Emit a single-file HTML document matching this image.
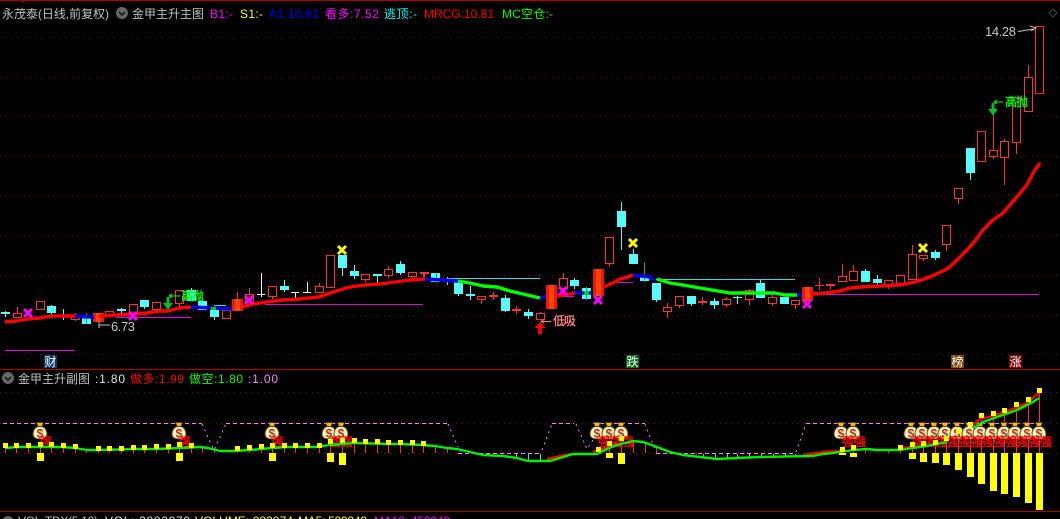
<!DOCTYPE html>
<html><head><meta charset="utf-8"><title>永茂泰</title>
<style>
html,body{margin:0;padding:0;background:#000;width:1060px;height:519px;overflow:hidden}
svg{display:block}
text{font-family:"Liberation Sans","WenQuanYi Zen Hei","Noto Sans CJK SC",sans-serif;font-size:12px}
.k{shape-rendering:crispEdges}
.s{stroke-width:.35}
.q{font-size:12px;stroke:#ff0000;stroke-width:.45}
</style></head><body>
<svg width="1060" height="519" viewBox="0 0 1060 519" xmlns="http://www.w3.org/2000/svg">
<defs>
<g id="bag">
<path d="M-3.5 -8.5L3.5 -8.5L1.8 -4.5L-1.8 -4.5Z" fill="#f0b828" stroke="#5a3a08" stroke-width=".7"/>
<path d="M-2 -4.5C-5.5 -3.5 -7 0 -7 3C-7 6.5 -4 8 0 8C4 8 7 6.5 7 3C7 0 5.5 -3.5 2 -4.5Z" fill="#fff0b8" stroke="#5a4010" stroke-width="1"/>
<text x="0" y="6.5" text-anchor="middle" fill="#983c28" style="font-size:12px;font-weight:bold">$</text>
</g>
<path id="xm" d="M-4 -4L4 4M4 -4L-4 4" fill="none" stroke="#ff00ff" stroke-width="3"/>
<path id="xy" d="M-4 -4L4 4M4 -4L-4 4" fill="none" stroke="#ffff00" stroke-width="3"/>
</defs>

<!-- frame -->
<g class="k" fill="#b00000">
<rect x="0" y="0" width="1060" height="1"/>
<rect x="23" y="0" width="1" height="3"/>
<rect x="0" y="369" width="1060" height="1"/>
<rect x="0" y="511" width="1060" height="1"/>
</g>
<!-- grid -->
<g class="k" stroke="#701010" stroke-width="1" stroke-dasharray="1 5" fill="none">
<path d="M0 37.5H1060M0 77.5H1060M0 116.5H1060M0 156.5H1060M0 195.5H1060M0 235.5H1060M0 275.5H1060M0 315.5H1060M0 354.5H1060M0 392.5H1060M0 423.5H1060M0 453.5H1060"/>
</g>
<path d="M1053 9L1057 13L1053 17L1049 13Z" fill="none" stroke="#444"/>

<!-- title -->
<text x="2" y="18" fill="#c0c0c0" textLength="107">永茂泰(日线,前复权)</text>
<circle cx="122" cy="13" r="6" fill="#666"/><path d="M119 12l3 3 3-3" fill="none" stroke="#111" stroke-width="1.5"/>
<text x="132" y="18" fill="#c0c0c0" textLength="72">金甲主升主图</text>
<text x="210" y="18" fill="#ff00ff" textLength="23">B1:-</text>
<text x="240" y="18" fill="#ffff00" textLength="23">S1:-</text>
<text x="269" y="18" fill="#0000ff" textLength="50">A1:10.81</text>
<text x="325" y="18" fill="#ff00ff" textLength="54">看多:7.52</text>
<text x="384" y="18" fill="#00ffff" textLength="33">逃顶:-</text>
<text x="424" y="18" fill="#ff0000" textLength="70">MRCG:10.81</text>
<text x="502" y="18" fill="#00ff00" textLength="51">MC空仓:-</text>

<!-- magenta / cyan levels -->
<g class="k" fill="#e000e0">
<rect x="5" y="350" width="70" height="1"/>
<rect x="116" y="317" width="75" height="1"/>
<rect x="265" y="304" width="158" height="1"/>
<rect x="563" y="296" width="11" height="1"/>
<rect x="609" y="282" width="24" height="1"/>
<rect x="825" y="294" width="214" height="1"/>
</g>
<g class="k" fill="#30e0e0">
<rect x="447" y="278" width="93" height="1"/>
<rect x="656" y="279" width="139" height="1"/>
<rect x="214" y="305" width="12" height="1"/>
</g>

<!-- hollow red candles -->
<path class="k" fill="none" stroke="#ff3232" d="
M13.5 313.5h8v4h-8zM17.5 307V313M17.5 318V318
M36.5 301.5h8v8h-8z
M71.5 316.5h8v3h-8zM75.5 313V316M75.5 320V321
M105.5 311.5h8v3h-8z
M129.5 304.5h8v9h-8z
M152.5 302.5h8v7h-8z
M175.5 290.5h8v13h-8zM179.5 304V307
M222.5 310.5h8v8h-8z
M245.5 294.5h8v10h-8zM249.5 288V294
M268.5 286.5h8v10h-8zM272.5 297V299
M315.5 286.5h8v6h-8zM319.5 283V286
M326.5 255.5h8v32h-8z
M361.5 274.5h8v5h-8zM365.5 280V282
M384.5 269.5h8v6h-8zM388.5 266V269M388.5 276V278
M408.5 272.5h8v4h-8zM412.5 277V280
M477.5 296.5h8v3h-8zM481.5 300V304
M536.5 313.5h8v6h-8zM540.5 312V313
M559.5 278.5h8v10h-8zM563.5 273V278
M605.5 237.5h8v26h-8zM609.5 264V267
M663.5 307.5h8v4h-8zM667.5 303V307M667.5 312V318
M675.5 296.5h8v9h-8zM679.5 306V308
M722.5 299.5h8v5h-8zM726.5 297V299M726.5 305V307
M745.5 290.5h8v9h-8zM749.5 289V290M749.5 300V305
M768.5 297.5h8v6h-8zM772.5 295V297M772.5 304V306
M791.5 300.5h8v4h-8zM795.5 305V309
M838.5 276.5h8v5h-8zM842.5 264V276
M849.5 271.5h8v9h-8zM853.5 265V271
M884.5 280.5h8v6h-8zM888.5 287V289
M896.5 275.5h8v8h-8z
M908.5 254.5h8v25h-8zM912.5 245V254
M919.5 255.5h8v3h-8zM923.5 259V261
M942.5 225.5h8v19h-8zM946.5 245V251
M954.5 188.5h8v10h-8zM958.5 199V204
M977.5 131.5h8v30h-8z
M989.5 150.5h8v6h-8zM993.5 112V150M993.5 157V159
M1000.5 141.5h8v16h-8zM1004.5 139V141M1004.5 158V185
M1012.5 97.5h8v45h-8zM1016.5 143V154
M1024.5 77.5h8v34h-8zM1028.5 65V77
M1035.5 26.5h8v67h-8z"/>
<!-- flat red crosses -->
<path class="k" fill="#ff3232" d="M420 272h9v2h-9zM423 274h2v3h-2zM489 295h9v2h-9zM493 292h1v8h-1zM512 309h9v2h-9zM516 306h1v8h-1zM698 301h9v2h-9zM702 297h1v8h-1zM815 285h9v1h-9zM819 278h1v12h-1zM826 284h9v2h-9zM830 286h1v3h-1z"/>
<!-- cyan candles -->
<path class="k" fill="#54fcfc" d="
M1 312h9v2h-9zM5 311h1v6h-1z
M47 306h9v7h-9zM51 305h1v10h-1z
M62 316h2v1h-2zM63 309h1v11h-1z
M82 317h9v7h-9z
M117 309h9v2h-9zM121 308h1v5h-1z
M140 300h9v7h-9zM144 307h1v2h-1z
M187 290h9v11h-9zM191 288h1v2h-1z
M198 301h9v9h-9z
M210 310h9v7h-9zM214 317h1v3h-1z
M280 286h9v4h-9zM284 280h1v12h-1z
M338 255h9v13h-9zM342 268h1v8h-1z
M350 271h9v5h-9zM354 265h1v14h-1z
M373 274h9v2h-9zM377 276h1v7h-1z
M396 264h9v9h-9zM400 261h1v14h-1z
M431 273h9v9h-9z
M443 281h9v1h-9zM447 277h1v8h-1z
M454 282h9v12h-9zM458 294h1v2h-1z
M466 294h9v2h-9zM470 286h1v14h-1z
M501 298h9v13h-9zM505 295h1v17h-1z
M524 312h9v4h-9zM528 309h1v10h-1z
M570 280h9v6h-9zM574 278h1v11h-1z
M582 288h9v11h-9z
M617 211h9v16h-9zM621 202h1v48h-1z
M629 254h9v10h-9zM633 249h1v5h-1z
M640 276h9v5h-9z
M652 283h9v17h-9zM656 300h1v2h-1z
M687 296h9v8h-9zM691 304h1v2h-1z
M710 301h9v4h-9zM714 298h1v11h-1z
M733 297h9v1h-9zM737 296h1v8h-1z
M756 283h9v15h-9zM760 280h1v3h-1z
M780 297h9v7h-9z
M861 271h9v11h-9zM865 269h1v2h-1z
M873 279h9v4h-9zM877 275h1v10h-1z
M931 252h9v6h-9zM935 250h1v10h-1z
M966 148h9v25h-9zM970 173h1v7h-1z"/>
<!-- green wicks -->
<path class="k" fill="#10b050" d="M86 313h1v11h-1zM436 273h1v10h-1zM586 287h1v13h-1zM644 262h1v20h-1z"/>
<!-- white crosses -->
<path class="k" fill="#f0f0f0" d="M257 294h8v1h-8zM261 273h1v24h-1zM291 292h8v1h-8zM295 292h1v6h-1zM303 292h8v1h-8zM307 282h1v11h-1z"/>
<!-- solid red -->
<g class="k">
<rect x="93" y="313" width="11" height="9" fill="#ee1515"/><rect x="96" y="313" width="5" height="9" fill="#ff4400"/>
<rect x="232" y="299" width="11" height="12" fill="#ee1515"/><rect x="235" y="299" width="5" height="12" fill="#ff4400"/><rect x="237" y="292" width="1" height="7" fill="#ff3232"/>
<rect x="546" y="285" width="11" height="24" fill="#ee1515"/><rect x="549" y="285" width="5" height="24" fill="#ff4400"/>
<rect x="593" y="269" width="11" height="27" fill="#ee1515"/><rect x="596" y="269" width="5" height="27" fill="#ff4400"/>
<rect x="802" y="287" width="11" height="14" fill="#ee1515"/><rect x="805" y="287" width="5" height="14" fill="#ff4400"/>
</g>

<!-- main MA -->
<g fill="none" stroke-width="3.4" stroke-linejoin="round">
<path stroke="#ff0000" d="M5 322L16 321L28 319L40 318L51 316L75 316M99 316.5L115 315L133 314L147 313L160 311L168 311L179 308L191 307M243 307L253 304L267 302L283 300L300 299L319 297L333 292L350 287L365 285L380 284L395 282L410 280L425 279M557 296L570 294L575 293M604 287L615 282L620 279L628 277L633 275M812 294L825 293L840 291L850 288L860 287L880 286L900 285L915 282L930 277L947 269L955 262L967 250L975 241L983 230L993 220L1003 213L1010 205L1015 199L1027 185L1033 173L1040 163"/>
<path stroke="#0000e0" d="M75 316.5L94 317M191 307L213 308L232 309M425 279L458 281M540 298L546 297M575 293L592 293M633 275L650 277L655 280M797 295L802 295"/>
<path stroke="#00ff00" d="M458 281L470 283L483 286L497 287L510 291L523 294L540 298M657 279L670 283L683 285L700 288L712 290L730 293L775 293L785 295L797 295"/>
</g>
<rect class="k" x="211" y="307" width="5" height="3" fill="#00d000"/>
<rect class="k" x="584" y="291" width="5" height="4" fill="#00d000"/>

<!-- X marks -->
<use href="#xm" x="28" y="313"/><use href="#xm" x="133" y="316"/><use href="#xm" x="249" y="300"/><use href="#xm" x="563" y="291"/><use href="#xm" x="598" y="300"/><use href="#xm" x="807" y="304"/>
<use href="#xy" x="342" y="250"/><use href="#xy" x="633" y="243"/><use href="#xy" x="923" y="248"/>

<!-- annotations -->
<path d="M99 322V328M99 325H110" fill="none" stroke="#c0c0c0" class="k"/>
<text x="111" y="331" fill="#c8c8c8" textLength="24" style="font-size:13px">6.73</text>
<path d="M541 321.5H551M541 321.5l3 -2M541 321.5l3 2" fill="none" stroke="#ff8080"/>
<text x="553" y="325" fill="#ff8080" stroke="#ff8080" class="s" textLength="23">低吸</text>
<path d="M540 322L545.5 328H542V334H538V328H534.500Z" fill="#ff0000"/>
<text x="985" y="36" fill="#c8c8c8" textLength="31" style="font-size:13px">14.28</text>
<path d="M1018 31.5L1034 29M1030 26L1036 28L1031 31" fill="none" stroke="#c0c0c0"/>
<path d="M994 102H1003M994 102l3 -2M994 102l3 2" fill="none" stroke="#00ff00"/>
<text x="1005" y="106" fill="#00ff00" stroke="#00ff00" class="s" textLength="23">高抛</text>
<path d="M991.500 103H994.500V109H998L993 115.500L988 109H991.500Z" fill="#00c030"/>
<path d="M169 296H180M169 296l3 -2M169 296l3 2" fill="none" stroke="#00ff00"/>
<text x="181" y="300" fill="#00ff00" stroke="#00ff00" class="s" textLength="23">高抛</text>
<path d="M166.500 297H169.500V303H173L168 310L163 303H166.500Z" fill="#00c030"/>

<!-- labels -->
<g class="k">
<rect x="44" y="355" width="13" height="13" fill="#0b3a66"/>
<rect x="626" y="355" width="13" height="13" fill="#0a6a14"/>
<rect x="951" y="355" width="13" height="13" fill="#7a4510"/>
<rect x="1009" y="355" width="13" height="13" fill="#7a0808"/>
</g>
<text x="44.5" y="366" fill="#fff">财</text>
<text x="626.5" y="366" fill="#fff">跌</text>
<text x="951.5" y="366" fill="#fff">榜</text>
<text x="1009.5" y="366" fill="#fff">涨</text>

<!-- sub title -->
<circle cx="8" cy="378" r="6" fill="#666"/><path d="M5 377l3 3 3-3" fill="none" stroke="#111" stroke-width="1.5"/>
<text x="18" y="383" fill="#c0c0c0" textLength="72">金甲主升副图</text>
<text x="95" y="383" fill="#e0e0e0" textLength="30">:1.80</text>
<text x="130" y="383" fill="#ff0000" textLength="54">做多:1.99</text>
<text x="189" y="383" fill="#00ff00" textLength="54">做空:1.80</text>
<text x="248" y="383" fill="#ff80ff" textLength="30">:1.00</text>

<!-- dashed -->
<g fill="none" stroke="#ff80ff" stroke-width="1" stroke-dasharray="4 3">
<path class="k" d="M3 423.5H202M226 423.5H448M552 423.5H574M593 423.5H645M806 423.5H1040M458 453.5H540M656 453.5H795"/>
</g>
<path fill="none" stroke="#ff80ff" stroke-dasharray="2 4" d="M202 424L214 450L226 424M448 424L458 447M542 450L552 424M576 424L587 449L593 440M645 424L656 452M796 452L806 424"/>

<!-- sticks -->
<path class="k" fill="none" stroke="#ff3030" d="M5.5 448V453M16.5 448V453M28.5 448V453M40.5 448V453M51.5 448V453M63.5 448V453M75.5 449V453M86.5 450V453M98.5 450V453M109.5 450V453M121.5 450V453M133.5 449V453M144.5 449V453M156.5 449V453M168.5 449V453M179.5 448V453M191.5 448V453M202.5 448V453M214.5 451V453M237.5 451V453M249.5 450V453M261.5 449V453M272.5 448V453M284.5 448V453M295.5 448V453M307.5 448V453M319.5 448V453M330.5 445V453M342.5 442V453M354.5 443V453M365.5 443V453M377.5 444V453M388.5 444V453M400.5 444V453M412.5 445V453M423.5 445V453M435.5 447V453M447.5 448V453M598.5 452V453M609.5 447V453M621.5 441V453M633.5 441V453M645.5 442V453M656.5 447V453M842.5 452V453M853.5 450V453M865.5 449V453M888.5 450V453M900.5 450V453M912.5 448V453M923.5 447V453M935.5 445V453M946.5 442V453M958.5 435V453M970.5 428V453M981.5 420V453M993.5 416V453M1004.5 413V453M1016.5 408V453M1028.5 402V453M1039.5 393V453"/>
<path class="k" fill="none" stroke="#40e0e0" d="M516.5 454V459M528.5 454V461M540.5 454V461M703.5 454V457M715.5 454V459M727.5 454V458M737.5 454V458M749.5 454V458M761.5 454V457M773.5 454V457M785.5 454V457M795.5 454V457"/>

<!-- yellow bars below -->
<path class="k" fill="#ffff00" d="M37 453h7v8h-7zM176 453h7v8h-7zM269 453h7v8h-7zM327 453h7v9h-7zM339 453h7v12h-7zM606 453h7v5h-7zM618 453h7v11h-7zM839 453h7v2h-7zM850 453h7v4h-7zM909 453h7v6h-7zM920 453h7v9h-7zM932 453h7v10h-7zM943 453h7v12h-7zM955 453h7v17h-7zM967 453h7v24h-7zM978 453h7v31h-7zM990 453h7v38h-7zM1001 453h7v41h-7zM1013 453h7v44h-7zM1025 453h7v50h-7zM1036 453h7v57h-7z"/>

<!-- bags -->
<use href="#bag" x="40" y="431"/><use href="#bag" x="179" y="431"/><use href="#bag" x="272" y="431"/><use href="#bag" x="329" y="431"/><use href="#bag" x="341" y="431"/><use href="#bag" x="597" y="431"/><use href="#bag" x="609" y="431"/><use href="#bag" x="621" y="431"/><use href="#bag" x="841" y="431"/><use href="#bag" x="853" y="431"/><use href="#bag" x="911" y="431"/><use href="#bag" x="922" y="431"/><use href="#bag" x="934" y="431"/><use href="#bag" x="945" y="431"/><use href="#bag" x="957" y="431"/><use href="#bag" x="969" y="431"/><use href="#bag" x="980" y="431"/><use href="#bag" x="992" y="431"/><use href="#bag" x="1004" y="431"/><use href="#bag" x="1015" y="431"/><use href="#bag" x="1027" y="431"/><use href="#bag" x="1039" y="431"/>

<!-- 强 -->
<g fill="#ff0000">
<text class="q" x="40" y="446">强</text><text class="q" x="179" y="446">强</text><text class="q" x="272" y="446">强</text><text class="q" x="329" y="446">强</text><text class="q" x="341" y="446">强</text><text class="q" x="598" y="446">强</text><text class="q" x="610" y="446">强</text><text class="q" x="622" y="446">强</text><text class="q" x="842" y="446">强</text><text class="q" x="854" y="446">强</text><text class="q" x="912" y="446">强</text><text class="q" x="923" y="446">强</text><text class="q" x="935" y="446">强</text><text class="q" x="946" y="446">强</text><text class="q" x="958" y="446">强</text><text class="q" x="970" y="446">强</text><text class="q" x="981" y="446">强</text><text class="q" x="993" y="446">强</text><text class="q" x="1005" y="446">强</text><text class="q" x="1016" y="446">强</text><text class="q" x="1028" y="446">强</text><text class="q" x="1040" y="446">强</text>
</g>

<!-- sub lines -->
<g fill="none" stroke-width="2.4" stroke-linejoin="round">
<path stroke="#ff0000" d="M547 459L570 454M593 452L607 447L617 443M803 455L823 452L843 451M903 448L927 445M973 425L980 419L993 416L1010 410L1027 403L1039 393"/>
<path stroke="#00ee00" d="M5 448L17 447L63 447L75 448L87 450L100 450L133 449L157 449L180 448L200 447L208 448L220 451L233 451L250 450L272 448L287 447L317 447L330 445L354 443L388 444L400 444L423 445L435 446L447 448L457 449L470 452L483 455L503 456L517 458L528 461L550 461L560 458L573 454L597 454L607 449L617 445L633 441L643 442L657 447L670 452L683 455L700 457L717 459L737 458L760 457L813 456L823 454L833 453L853 450L867 449L877 450L900 450L913 448L927 446L947 442M973 428L983 422L1000 416L1017 410L1033 402L1039 398"/>
</g>

<!-- yellow squares -->
<path class="k" fill="#ffff00" d="M3 443h5v5h-5zM14 443h5v5h-5zM26 443h5v5h-5zM38 442h5v5h-5zM49 442h5v5h-5zM61 443h5v5h-5zM73 444h5v5h-5zM96 446h5v5h-5zM107 446h5v5h-5zM119 446h5v5h-5zM131 445h5v5h-5zM142 445h5v5h-5zM154 444h5v5h-5zM166 444h5v5h-5zM177 442h5v5h-5zM189 443h5v5h-5zM235 446h5v5h-5zM247 445h5v5h-5zM259 444h5v5h-5zM270 443h5v5h-5zM282 443h5v5h-5zM293 443h5v5h-5zM305 443h5v5h-5zM317 443h5v5h-5zM328 439h5v5h-5zM340 438h5v5h-5zM352 438h5v5h-5zM363 439h5v5h-5zM375 439h5v5h-5zM386 440h5v5h-5zM398 440h5v5h-5zM410 440h5v5h-5zM421 441h5v5h-5zM596 447h5v5h-5zM607 441h5v5h-5zM619 436h5v5h-5zM840 447h5v5h-5zM851 445h5v5h-5zM898 445h5v5h-5zM910 442h5v5h-5zM921 441h5v5h-5zM933 440h5v5h-5zM944 436h5v5h-5zM956 429h5v5h-5zM968 422h5v5h-5zM979 413h5v5h-5zM991 411h5v5h-5zM1002 408h5v5h-5zM1014 402h5v5h-5zM1026 397h5v5h-5zM1037 388h5v5h-5z"/>

<!-- bottom title -->
<circle cx="8" cy="522" r="6" fill="#666"/>
<text x="18" y="525" fill="#c0c0c0" textLength="80">VOL-TDX(5,10)</text>
<text x="105" y="525" fill="#e0e0e0" textLength="85">VOL: 2882979</text>
<text x="195" y="525" fill="#ffff00" textLength="98">VOLUME: 283974</text>
<text x="298" y="525" fill="#ffff00" textLength="69">MA5: 599949</text>
<text x="374" y="525" fill="#ff00ff" textLength="76">MA10: 459949</text>
</svg>
</body></html>
